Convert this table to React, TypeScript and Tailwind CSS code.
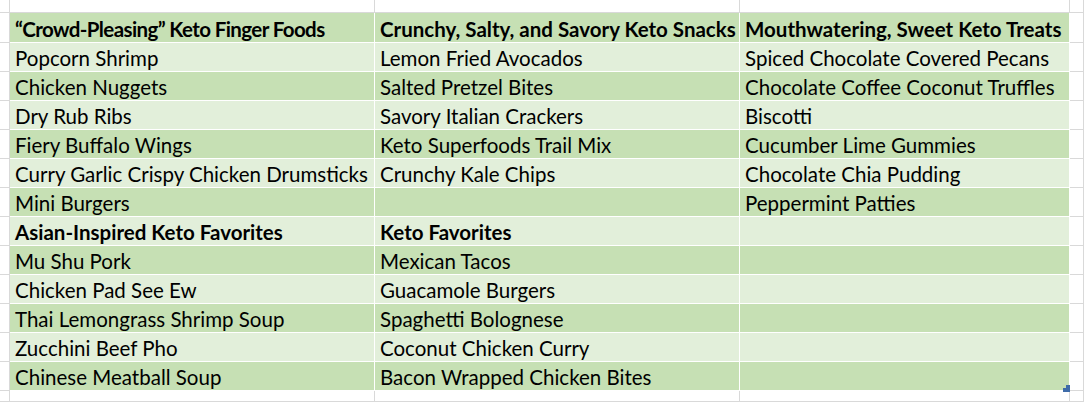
const rows: [string, string, string, boolean][] = [
  ["“Crowd-Pleasing” Keto Finger Foods", "Crunchy, Salty, and Savory Keto Snacks", "Mouthwatering, Sweet Keto Treats", true],
  ["Popcorn Shrimp", "Lemon Fried Avocados", "Spiced Chocolate Covered Pecans", false],
  ["Chicken Nuggets", "Salted Pretzel Bites", "Chocolate Coffee Coconut Truffles", false],
  ["Dry Rub Ribs", "Savory Italian Crackers", "Biscotti", false],
  ["Fiery Buffalo Wings", "Keto Superfoods Trail Mix", "Cucumber Lime Gummies", false],
  ["Curry Garlic Crispy Chicken Drumsticks", "Crunchy Kale Chips", "Chocolate Chia Pudding", false],
  ["Mini Burgers", "", "Peppermint Patties", false],
  ["Asian-Inspired Keto Favorites", "Keto Favorites", "", true],
  ["Mu Shu Pork", "Mexican Tacos", "", false],
  ["Chicken Pad See Ew", "Guacamole Burgers", "", false],
  ["Thai Lemongrass Shrimp Soup", "Spaghetti Bolognese", "", false],
  ["Zucchini Beef Pho", "Coconut Chicken Curry", "", false],
  ["Chinese Meatball Soup", "Bacon Wrapped Chicken Bites", "", false],
];

function Blank() {
  return <div className="border-r border-b border-[#d9d9d9] bg-white" />;
}

export default function App() {
  return (
    <div
      className="relative h-[402px] w-[1084px] overflow-hidden bg-white text-black"
      style={{ fontFamily: "Lato, 'Open Sans', sans-serif" }}
    >
      <div className="grid grid-cols-[10px_365px_365px_330px_14px] grid-rows-[13px_30px_repeat(12,29px)_1fr] h-full">
        <Blank />
        <Blank />
        <Blank />
        <Blank />
        <Blank />
        {rows.map((r, i) => {
          const bg = i % 2 === 0 ? "bg-[#c6e0b4]" : "bg-[#e2efda]";
          return [
            <Blank key={`a${i}`} />,
            ...[r[0], r[1], r[2]].map((t, j) => (
              <div
                key={`${i}-${j}`}
                className={`flex items-end overflow-visible whitespace-nowrap border-r border-b border-white pb-[3px] pl-[5px] text-[20.5px] leading-none ${bg} ${r[3] ? "font-bold" : ""} ${i === 0 && j === 0 ? "tracking-[-0.6px]" : ""}`}
              >
                {t}
              </div>
            )),
            <Blank key={`z${i}`} />,
          ];
        })}
        <Blank />
        <Blank />
        <Blank />
        <Blank />
        <Blank />
      </div>
      <svg className="absolute left-[1063px] top-[385px]" width="7" height="7" viewBox="0 0 7 7">
        <path d="M3 0h4v7H0V3h3z" fill="#3f6ca9" />
      </svg>
    </div>
  );
}
